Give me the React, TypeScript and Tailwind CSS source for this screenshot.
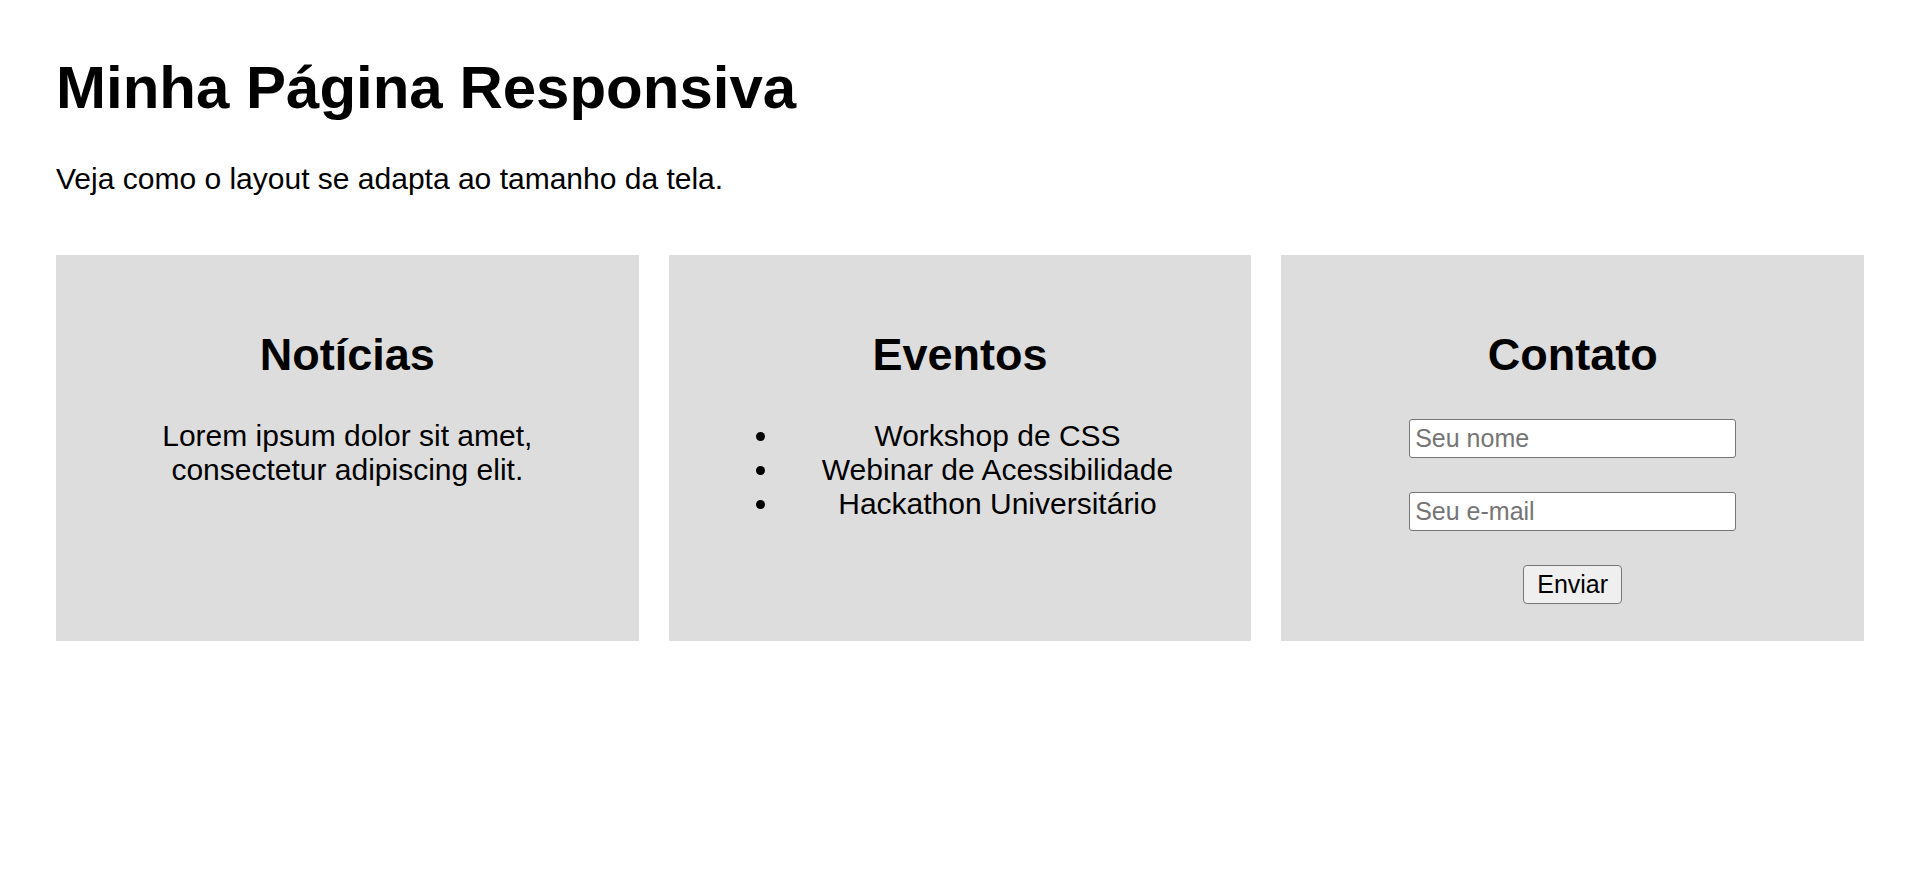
import type { ReactNode } from "react";

const events = ["Workshop de CSS", "Webinar de Acessibilidade", "Hackathon Universitário"];

function Card({ title, children }: { title: string; children: ReactNode }) {
  return (
    <section className="bg-[#dddddd] px-[37px] pt-[75px] pb-[37px] text-center">
      <h2 className="mb-[39px] text-[45px] leading-[50px] font-bold">{title}</h2>
      {children}
    </section>
  );
}

function Field({ type, label }: { type: string; label: string }) {
  return (
    <input
      type={type}
      aria-label={label}
      placeholder={label}
      className="h-[39px] w-[327px] max-w-full rounded-[3px] border border-[#767676] bg-white px-[5px] text-[25px] leading-[29px] placeholder:text-[#757575]"
    />
  );
}

export default function App() {
  return (
    <div className="min-h-screen bg-white px-14 py-[54px] font-['Liberation_Sans',Arial,sans-serif] text-[30px] leading-[34px] text-black">
      <header className="mb-[59px]">
        <h1 className="mb-10 text-[60px] leading-[68px] font-bold">Minha Página Responsiva</h1>
        <p>Veja como o layout se adapta ao tamanho da tela.</p>
      </header>
      <main className="grid grid-cols-1 gap-[30px] lg:grid-cols-3">
        <Card title="Notícias">
          <p>Lorem ipsum dolor sit amet, consectetur adipiscing elit.</p>
        </Card>
        <Card title="Eventos">
          <ul className="list-disc pl-[75px]">
            {events.map((event) => (
              <li key={event}>{event}</li>
            ))}
          </ul>
        </Card>
        <Card title="Contato">
          <form className="flex flex-col items-center gap-[34px]" onSubmit={(e) => e.preventDefault()}>
            <Field type="text" label="Seu nome" />
            <Field type="email" label="Seu e-mail" />
            <button
              type="submit"
              className="h-[39px] rounded-[4px] border border-[#767676] bg-[#efefef] px-[13px] text-[25px] leading-[29px]"
            >
              Enviar
            </button>
          </form>
        </Card>
      </main>
    </div>
  );
}
